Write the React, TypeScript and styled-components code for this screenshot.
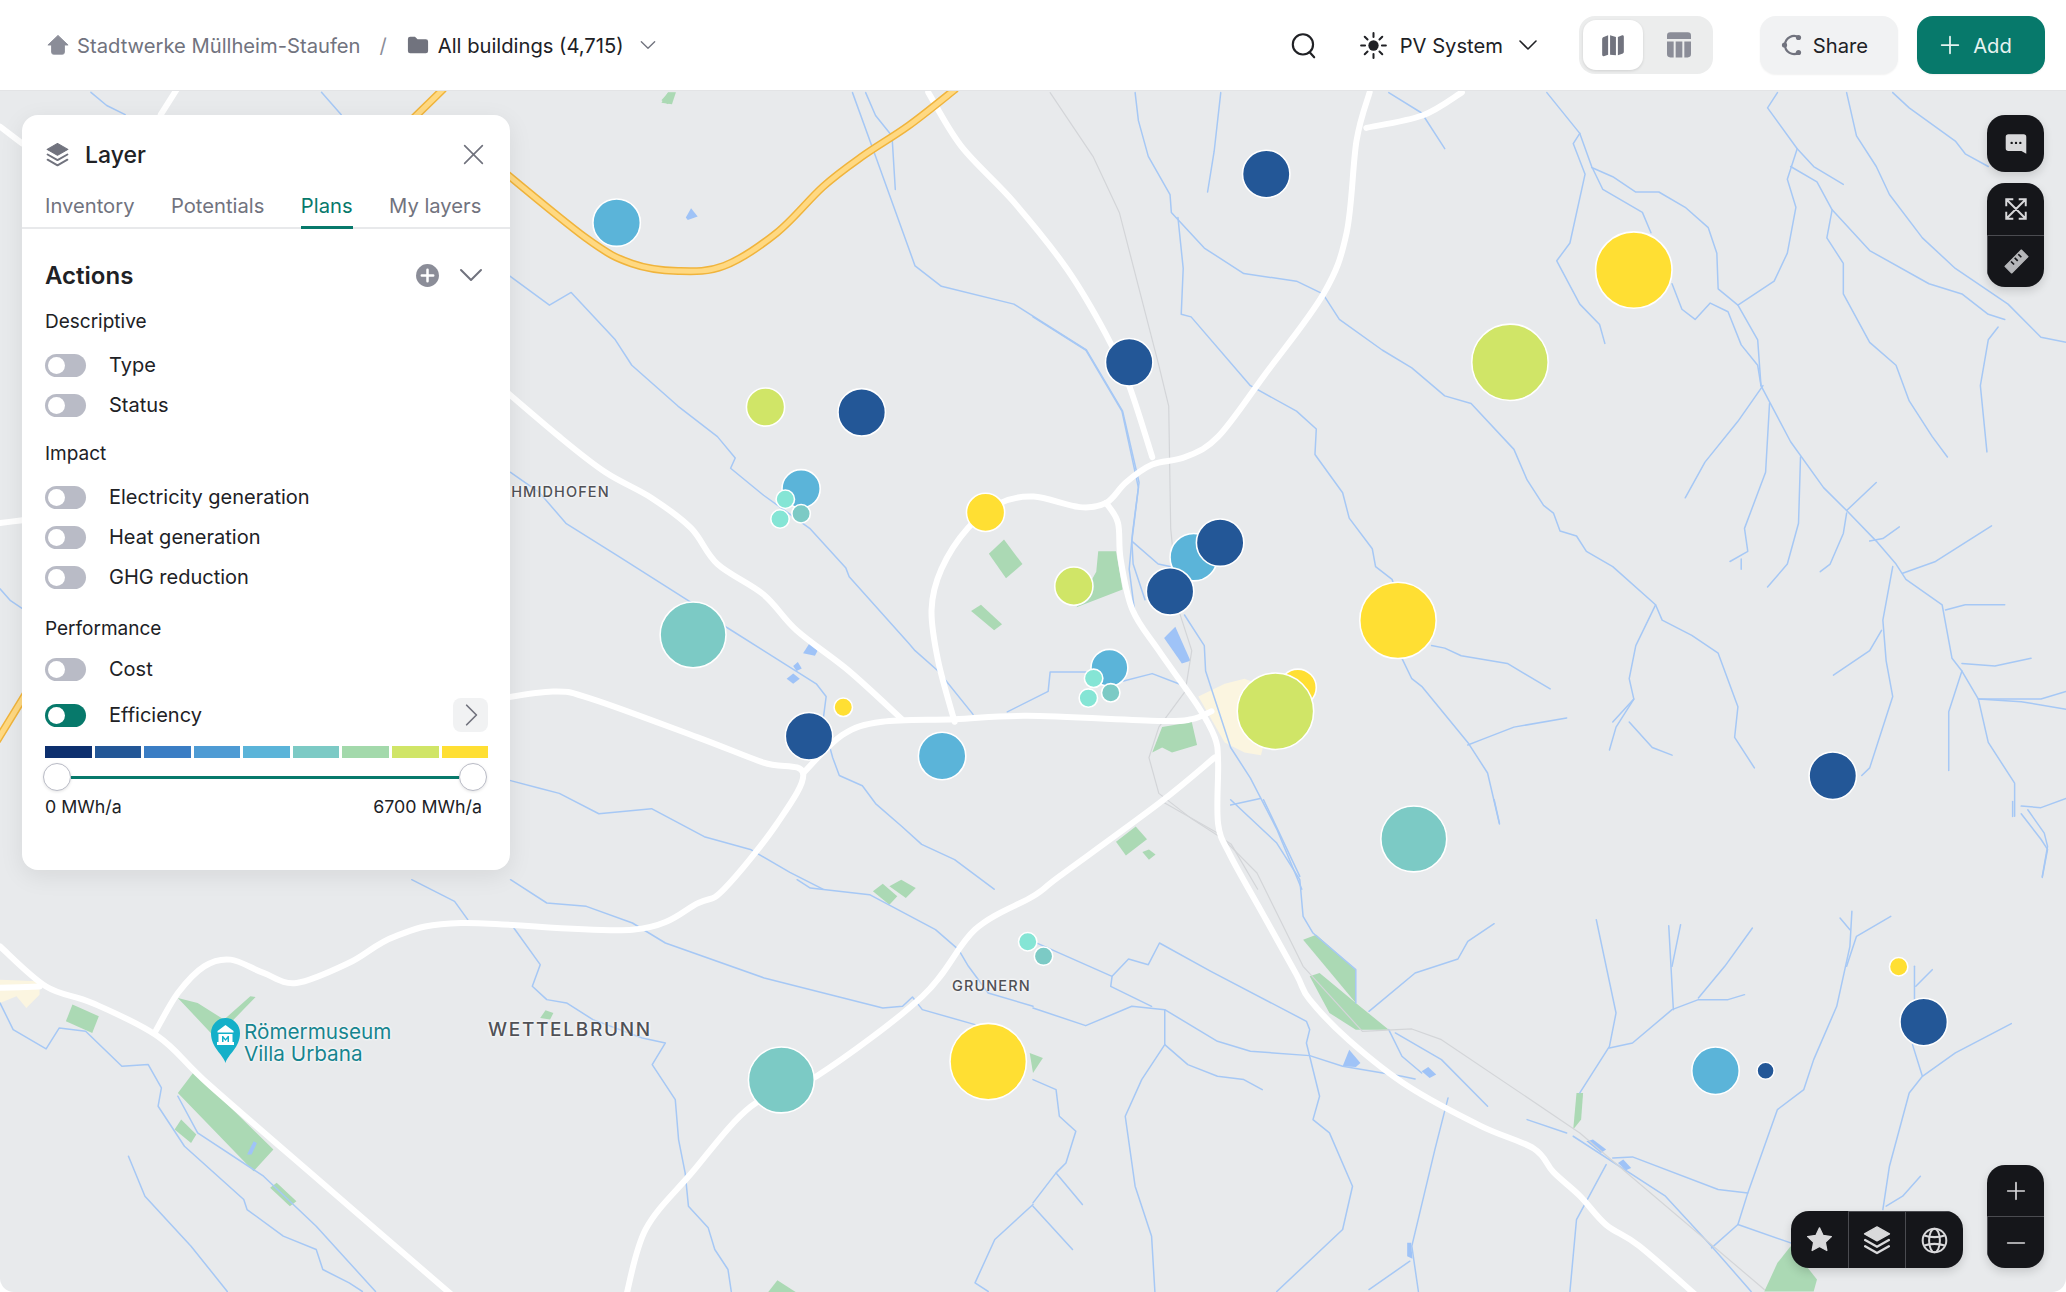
import React from 'react';
import { createGlobalStyle, styled } from 'styled-components';

const TEAL = '#07796b';
const GREY = '#71737e';
const INK = '#202125';

const GlobalStyle = createGlobalStyle`
  html, body { margin: 0; padding: 0; background: #fff; }
  body { font-family: Inter, "Noto Sans", sans-serif; color: ${INK}; }
  * { box-sizing: border-box; }
`;

const Page = styled.div`
  width: 2066px;
  height: 1292px;
  display: flex;
  flex-direction: column;
  overflow: hidden;
`;

const TopBar = styled.header`
  flex: none;
  height: 91px;
  display: flex;
  align-items: center;
  justify-content: space-between;
  padding: 0 21px 0 47px;
  border-bottom: 1px solid #e3e4e6;
  font-size: 20.2px;
`;

const Crumbs = styled.nav`
  display: flex;
  align-items: center;
`;

const CrumbRoot = styled.span`
  margin-left: 8px;
  color: ${GREY};
`;

const CrumbSep = styled.span`
  margin: 0 20px 0 19px;
  color: #8b8d98;
`;

const CrumbCurrent = styled.span`
  margin: 0 14px 0 9px;
  color: ${INK};
`;

const Actions = styled.div`
  display: flex;
  align-items: center;
`;

const SearchSlot = styled.div`
  display: flex;
  margin-right: 43px;
`;

const SystemPicker = styled.div`
  display: flex;
  align-items: center;
  gap: 13px;
  margin-right: 39px;
  white-space: nowrap;
`;

const ViewSwitch = styled.div`
  display: flex;
  width: 134px;
  height: 58px;
  padding: 4px;
  background: #eceded;
  border-radius: 16px;
  margin-right: 47px;
`;

const ViewButton = styled.div<{ $active?: boolean }>`
  flex: none;
  width: ${({ $active }) => ($active ? 60 : 72)}px;
  display: flex;
  align-items: center;
  justify-content: center;
  border-radius: 13px;
  background: ${({ $active }) => ($active ? '#fff' : 'transparent')};
  box-shadow: ${({ $active }) => ($active ? '0 1px 3px rgba(0,0,0,.12)' : 'none')};
`;

const BarButton = styled.button<{ $primary?: boolean }>`
  height: 58px;
  width: ${({ $primary }) => ($primary ? 128 : 138)}px;
  margin-left: ${({ $primary }) => ($primary ? 19 : 0)}px;
  padding: 0 10px 0 0;
  display: flex;
  align-items: center;
  justify-content: center;
  gap: ${({ $primary }) => ($primary ? 13 : 9)}px;
  border: 0;
  border-radius: 16px;
  font: inherit;
  color: ${({ $primary }) => ($primary ? '#e6f3f1' : INK)};
  background: ${({ $primary }) => ($primary ? TEAL : '#f1f2f3')};
  box-shadow: 0 1px 2px rgba(0, 0, 0, 0.06);
`;

const MapArea = styled.main`
  position: relative;
  flex: 1;
  background: #e8eaec;
  border-radius: 0 0 14px 14px;
  overflow: hidden;
`;

const MapDrawing = styled.svg`
  position: absolute;
  inset: 0;
  width: 100%;
  height: 100%;
`;

const Strokes = styled.g<{ $color: string; $width: number }>`
  polyline,
  path {
    fill: none;
    stroke: ${({ $color }) => $color};
    stroke-width: ${({ $width }) => $width}px;
    stroke-linejoin: round;
    stroke-linecap: round;
    vector-effect: non-scaling-stroke;
  }
`;

const Fills = styled.g<{ $color: string }>`
  polygon {
    fill: ${({ $color }) => $color};
  }
`;

const Dot = styled.circle`
  stroke: #fff;
  stroke-width: 1.2;
`;

const PlaceLabel = styled.span<{ $x: number; $y: number; $size: number; $spacing: number }>`
  position: absolute;
  left: ${({ $x }) => $x}px;
  top: ${({ $y }) => $y}px;
  transform: translateY(-50%);
  font-size: ${({ $size }) => $size}px;
  font-weight: 500;
  letter-spacing: ${({ $spacing }) => $spacing}px;
  color: #505156;
  white-space: nowrap;
  text-shadow: 0 0 3px #fff, 0 0 3px #fff;
`;

const Poi = styled.div`
  position: absolute;
  left: 211px;
  top: 927px;
  display: flex;
  align-items: flex-start;
  gap: 4px;
`;

const PoiName = styled.div`
  padding-top: 3px;
  font-size: 20.7px;
  line-height: 22px;
  color: #17858f;
  text-shadow: 0 0 3px #fff, 0 0 3px #fff;
`;

const Panel = styled.aside`
  position: absolute;
  left: 22px;
  top: 24px;
  width: 488px;
  height: 755px;
  background: #fff;
  border-radius: 16px;
  box-shadow: 0 6px 24px rgba(0, 0, 0, 0.08);
`;

const PanelHead = styled.div`
  height: 63px;
  padding: 16px 24px 0 23px;
  display: flex;
  align-items: center;
  justify-content: space-between;
`;

const PanelTitle = styled.div`
  display: flex;
  align-items: center;
  gap: 15px;
  font-size: 23px;
  font-weight: 500;
`;

const Tabs = styled.div`
  height: 51px;
  padding: 0 23px;
  display: flex;
  gap: 36.5px;
  border-bottom: 2px solid #e8e9eb;
`;

const Tab = styled.div<{ $active?: boolean }>`
  height: 51px;
  padding-top: 15px;
  font-size: 20.2px;
  color: ${({ $active }) => ($active ? TEAL : GREY)};
  border-bottom: 3px solid ${({ $active }) => ($active ? TEAL : 'transparent')};
`;

const PanelBody = styled.div`
  padding: 0 22px 0 23px;
`;

const SectionHead = styled.div`
  height: 79px;
  padding-top: 13px;
  display: flex;
  align-items: center;
  justify-content: space-between;
`;

const SectionName = styled.div`
  font-size: 24px;
  font-weight: 600;
`;

const SectionTools = styled.div`
  display: flex;
  align-items: center;
  gap: 16px;
  padding-right: 2px;
`;

const Group = styled.div<{ $after: number }>`
  margin-bottom: ${({ $after }) => $after}px;
`;

const GroupName = styled.div<{ $after: number }>`
  height: 28px;
  line-height: 28px;
  font-size: 19px;
  margin-bottom: ${({ $after }) => $after}px;
`;

const Row = styled.div<{ $tall?: boolean }>`
  height: ${({ $tall }) => ($tall ? 52 : 40)}px;
  display: flex;
  align-items: center;
  gap: 23px;
  font-size: 20px;
`;

const Switch = styled.span<{ $on?: boolean }>`
  flex: none;
  width: 41px;
  height: 23px;
  padding: 3px;
  border-radius: 12px;
  display: flex;
  background: ${({ $on }) => ($on ? TEAL : '#b9bbc6')};

  &::before {
    content: '';
    width: 17px;
    height: 17px;
    border-radius: 50%;
    background: #fff;
  }
`;

const Expand = styled.span`
  margin-left: auto;
  width: 35px;
  height: 34px;
  display: flex;
  align-items: center;
  justify-content: center;
  background: #f1f2f3;
  border-radius: 8px;
`;

const Scale = styled.div`
  display: flex;
  gap: 3px;
  margin-top: 5px;
`;

const ScaleStep = styled.span<{ $color: string }>`
  flex: 1;
  height: 12px;
  background: ${({ $color }) => $color};
`;

const Slider = styled.div`
  height: 38px;
  display: flex;
  align-items: center;
  margin: 0 1px 0 -2px;
`;

const SliderTrack = styled.div`
  flex: 1;
  height: 3px;
  background: ${TEAL};
`;

const SliderHandle = styled.span`
  width: 28px;
  height: 28px;
  flex: none;
  border-radius: 50%;
  background: #fff;
  border: 1.5px solid #b9bbc6;
  box-shadow: 0 1px 3px rgba(0, 0, 0, 0.1);
`;

const Range = styled.div`
  display: flex;
  justify-content: space-between;
  padding-right: 6px;
  font-size: 17.8px;
`;

const Controls = styled.div`
  position: absolute;
  top: 24px;
  right: 22px;
  bottom: 24px;
  display: flex;
  flex-direction: column;
  justify-content: space-between;
  align-items: flex-end;
`;

const ControlTop = styled.div`
  display: flex;
  flex-direction: column;
  gap: 11px;
`;

const ControlBottom = styled.div`
  display: flex;
  align-items: flex-end;
  gap: 24px;
`;

const Stack = styled.div<{ $row?: boolean }>`
  display: flex;
  flex-direction: ${({ $row }) => ($row ? 'row' : 'column')};
  width: ${({ $row }) => ($row ? 172 : 57)}px;
  background: #15161a;
  border-radius: 18px;
  box-shadow: 0 4px 10px rgba(0, 0, 0, 0.14);
  overflow: hidden;
`;

const StackCell = styled.div<{ $row?: boolean; $h?: number }>`
  flex: ${({ $row }) => ($row ? 1 : 'none')};
  height: ${({ $h }) => $h ?? 57}px;
  display: flex;
  align-items: center;
  justify-content: center;
  color: #d9d9db;

  & + & {
    ${({ $row }) => ($row ? 'border-left' : 'border-top')}: 1px solid #4a4b50;
  }
`;

const Icon = styled.svg<{ $size: number; $color?: string }>`
  flex: none;
  width: ${({ $size }) => $size}px;
  height: ${({ $size }) => $size}px;
  color: ${({ $color }) => $color ?? 'currentColor'};
`;

type IconProps = { size: number; color?: string; children: React.ReactNode };

const Ico = ({ size, color, children }: IconProps) => (
  <Icon $size={size} $color={color} viewBox="0 0 24 24" fill="none" stroke="none">
    {children}
  </Icon>
);

const Chevron = ({ size, color, dir = 'down' }: { size: number; color: string; dir?: 'down' | 'right' }) => (
  <Ico size={size} color={color}>
    <path
      d={dir === 'down' ? 'M4 8l8 8 8-8' : 'M8 3l9 9-9 9'}
      stroke="currentColor"
      strokeWidth="1.6"
      strokeLinecap="round"
      strokeLinejoin="round"
    />
  </Ico>
);

const LayersGlyph = ({ size, color }: { size: number; color?: string }) => (
  <Ico size={size} color={color}>
    <path d="M12 1.500l10 5.600-10 5.600L2 7.100z" fill="currentColor" stroke="currentColor" strokeLinejoin="round" />
    <path
      d="M2.500 12l9.500 5.400 9.500-5.400M2.500 17l9.500 5.400 9.500-5.400"
      stroke="currentColor"
      strokeWidth="1.9"
      strokeLinecap="round"
      strokeLinejoin="round"
    />
  </Ico>
);

const smooth = (pts: number[][]) => {
  let d = `M${pts[0][0]} ${pts[0][1]}`;
  for (let i = 0; i < pts.length - 1; i++) {
    const p0 = pts[i - 1] ?? pts[i];
    const p1 = pts[i];
    const p2 = pts[i + 1];
    const p3 = pts[i + 2] ?? p2;
    const c1 = [p1[0] + (p2[0] - p0[0]) / 6, p1[1] + (p2[1] - p0[1]) / 6];
    const c2 = [p2[0] - (p3[0] - p1[0]) / 6, p2[1] - (p3[1] - p1[1]) / 6];
    d += `C${c1[0].toFixed(1)} ${c1[1].toFixed(1)} ${c2[0].toFixed(1)} ${c2[1].toFixed(1)} ${p2[0]} ${p2[1]}`;
  }
  return d;
};

// crops of the map were traced at different scales, one transform per crop
const Z5 = 'translate(0 667.9) scale(.5 .253)';
const Z6 = 'translate(379.5 68.3) scale(.5 .387)';
const Z7 = 'translate(784 68.3) scale(.5 .387)';
const Z8 = 'translate(784 607.2) scale(.5 .253)';

const water: [string, string[]][] = [
  [
    Z5,
    [
      '625,0 690,65 710,120',
      '775,0 830,70 890,80 960,130 1010,190 1160,295 1340,385 1370,380 1385,352 1400,390 1480,435',
      '1210,0 1230,25 1320,45 1420,150 1455,210 1470,260 1500,340 1568,380',
      '780,145 820,255 808,320 830,360 860,370 900,420 975,475 1010,490 990,555 1025,660 1030,780 1040,880 1045,980 1075,1045 1085,1110 1105,1170 1110,1236',
      '0,370 20,450 70,508 90,445 130,455 185,560 225,555 245,625 240,680 280,800 370,960 375,990 430,1070 480,1110 490,1170 530,1210 550,1236',
      '195,830 220,950 290,1100 345,1236',
      '270,650 300,760 400,890 480,1040 570,1236',
      '1568,975 1510,1080 1480,1210 1500,1236',
    ],
  ],
  [
    Z6,
    [
      '15,365 75,422 108,397 175,490 200,540 270,620 330,680 357,722 350,742 400,795 470,860 525,938 530,955 620,1085 630,1100 665,1140 718,1225',
      '16,750 60,790 100,850 180,915 290,1005 345,1055 480,1165 495,1190 490,1240 505,1310 515,1345 550,1365 570,1400 610,1445 640,1480 690,1510 750,1568',
      '16,1355 60,1370 90,1380 150,1420 230,1410 310,1465 380,1490 440,1535 490,1568',
      '535,5 570,130 630,345 670,385 780,420 890,510 945,630 970,770 960,870 955,940 965,1040',
      '555,5 570,50 595,90 600,195',
      '770,1220 832,1180 835,1142 890,1142',
      '945,1160 990,1145 1030,1165',
    ],
  ],
  [
    Z7,
    [
      '155,5 160,60 175,130 208,205 210,240 260,310 320,360 400,375 440,400 465,450 530,510 575,545 625,600 665,615 730,705 750,765 775,815 790,830 800,865 825,875 840,905 880,935 945,1010 955,1040 1000,1070 1040,1105 1070,1210 1065,1270 1095,1330',
      '220,250 228,350 225,440 240,445 330,580 400,630 430,665 428,715 470,790 480,840 515,900 520,935 545,960 555,1000',
      '560,1115 575,1155 590,1170 660,1280 690,1340 708,1440',
      '285,5 275,120 265,200',
      '540,5 590,45 625,115',
      '780,5 830,85 820,105 838,165 815,300 795,335 830,420 860,460 868,497',
      '830,85 848,150 865,195 925,240 938,280',
      '970,380 985,430 1005,450 1028,418 1055,435 1075,500 1100,540 1105,580',
      '848,152 880,170 915,200 950,200 990,230 1025,270 1038,320 1040,390 1070,422 1125,375 1145,320 1158,230 1145,175 1160,115 1115,35 1130,5',
      '1070,422 1100,490 1105,580 1150,690 1200,780 1235,825 1280,885 1310,930 1325,960 1380,1010 1395,1115 1410,1140 1435,1195 1530,1195 1568,1180',
      '1160,115 1185,150 1230,185',
      '1150,150 1190,180 1213,235 1270,315 1360,380 1410,400 1450,440 1475,450',
      '1235,5 1250,90 1280,150 1300,205 1350,290 1400,350 1480,420 1530,485 1568,495',
      '1305,5 1330,35 1400,100 1415,125 1450,150',
      '1213,235 1205,290 1230,340 1230,400 1270,495 1310,540 1330,610 1365,680 1388,720',
      '1465,465 1450,490 1438,580 1448,710',
      '1108,580 1070,650 1020,730 990,800',
      '1118,615 1112,750 1080,860 1085,905 1058,925',
      '1075,920 1075,940',
      '1165,720 1162,850 1145,930 1115,975',
      '1235,825 1280,770',
      '1235,830 1230,870 1210,930 1195,945',
      '1270,885 1290,880 1315,857',
      '1320,948 1370,925 1455,855',
      '1305,935 1290,1040 1295,1120 1305,1190 1270,1330 1258,1345',
      '1288,1060 1270,1100 1215,1148',
      '1385,1020 1415,1010 1475,1010',
      '1410,1125 1460,1130 1515,1115',
      '1410,1140 1390,1220 1390,1335',
      '1435,1195 1450,1280 1490,1360 1490,1425',
      '1500,1405 1530,1408 1568,1390',
      '1500,1420 1530,1470 1540,1490 1532,1545',
      '1435,1195 1500,1200 1568,1215',
      '945,1010 915,1090 905,1155 912,1195 880,1240',
      '912,1195 885,1250 875,1295',
      '905,1240 940,1290 970,1305',
      '605,1090 625,1095 650,1110 720,1125 785,1175',
      '660,1285 680,1275 730,1250 810,1232',
      '150,885 190,930 208,935',
      '230,1030 260,1090 262,1140 300,1290 330,1350 370,1450 408,1568',
      '300,1403 345,1390',
      '0,445 80,510 135,630 160,780 150,885 152,930 170,1000',
    ],
  ],
  [
    Z8,
    [
      '300,0 370,130 405,240 410,350 425,400 490,510 490,610',
      '350,0 405,230',
      '0,425 120,530 118,560 180,620',
      '120,530 145,478 175,495 192,430 270,515 415,665 420,690 415,730 435,890 425,960 450,1000 485,1160 470,1290 370,1476',
      '0,625 80,678 150,620 200,630 280,725 330,755 420,768 470,800 560,830 580,838',
      '200,630 200,735 165,840 140,950 155,1160 180,1310 185,1476',
      '200,735 235,795 280,830 320,840 348,870',
      '510,635 580,520 645,478 660,425 700,372',
      '540,690 560,770 590,820',
      '550,700 620,780 690,920',
      '855,360 885,640 875,740 830,880',
      '875,745 910,730 970,630 1010,600 1055,600 1080,585',
      '965,378 972,630',
      '983,375 970,500',
      '1092,385 1050,500 1010,595',
      '1225,355 1240,390',
      '1243,335 1240,440 1220,620 1185,780 1170,870 1130,930 1085,1180 1070,1275 1030,1345',
      '1302,350 1250,410 1235,500',
      '1338,500 1338,600',
      '1365,510 1340,560',
      '1335,735 1350,830 1330,880 1300,1100 1290,1230',
      '1485,672 1400,760 1350,830',
      '1347,1130 1320,1190 1295,1220',
      '880,1075 910,1072 1040,1170 1085,1180',
      '630,895 610,1050 575,1340 585,1476',
      '870,1095 825,1260 815,1476',
      '820,1010 960,1190 1030,1340 1090,1476',
      '750,960 810,1000',
      '0,1220 60,1350',
      '0,1210 35,1120 75,1215',
      '0,840 35,870 40,950 65,995 50,1090 35,1120',
      '572,1385 510,1470',
      '1070,1275 1150,1330',
      '1487,5 1487,50',
      '1510,30 1535,100 1540,140 1532,230',
      '700,0 708,70',
    ],
  ],
  ['', ['69,70 81,80 95,87', '244,70 259,87', '0,447 8,456 17,462']],
];

const greens: [string, string[]][] = [
  [
    Z5,
    [
      '110,375 150,410 140,460 100,425',
      '270,355 300,370 340,420 380,350 388,352 340,450 320,460',
      '295,575 320,625 415,810 385,875 270,640',
      '265,750 275,720 298,765 290,790',
      '410,925 420,910 450,965 440,980',
      '820,415 828,392 840,400 835,420',
      '1325,35 1340,12 1362,50 1350,75',
      '1350,20 1368,0 1390,25 1375,55',
    ],
  ],
  [
    Z6,
    [
      '742,910 765,882 793,930 768,958',
      '715,1022 730,1010 762,1048 750,1060',
      '875,1015 905,945 908,905 935,905 945,980',
      '990,1300 1005,1250 1050,1240 1058,1285 1020,1300 1005,1290',
      '935,1475 965,1445 982,1470 950,1502',
      '975,1495 985,1490 995,1500 985,1510',
      '245,20 255,5 265,5 255,28',
    ],
  ],
  [
    Z8,
    [
      '410,420 430,405 490,510 490,610',
      '420,530 435,520 490,610 540,690 490,690 450,640',
      '825,880 835,880 832,960 820,990',
      '-5,760 15,775 0,820',
      '1130,1390 1150,1340 1190,1440 1185,1476 1110,1476',
    ],
  ],
  ['', ['502,78 507,70 513,70 510,79', '580,985 590,972 610,985 605,992']],
];

const ponds: [string, string[]][] = [
  [
    Z6,
    [
      '1008,1075 1025,1053 1048,1120 1035,1125',
      '282,250 290,232 300,248 285,255',
      '435,1155 445,1145 455,1155 445,1165',
      '460,1105 470,1085 482,1100 478,1110',
      '445,1130 452,1122 458,1135 450,1140',
    ],
  ],
  [
    Z8,
    [
      '470,800 480,750 497,790 490,802',
      '840,1025 850,1020 870,1050 862,1060',
      '888,1090 896,1080 908,1105 900,1112',
      '590,815 600,802 612,825 602,835',
      '568,1330 574,1330 576,1378 568,1370',
    ],
  ],
  [Z5, ['375,825 385,785 390,790 382,825']],
];

const urban: [string, string[]][] = [
  [Z6, ['1060,1190 1100,1165 1130,1155 1180,1180 1155,1305 1130,1300 1100,1280']],
  [Z5, ['0,300 60,305 60,345 40,385 25,350 0,370']],
];

const roads: number[][][] = [
  [[704.5, 70], [729.5, 110.9], [769.5, 153.4], [809.5, 203.8], [839.5, 254], [857, 292.8], [874.5, 347]],
  [[1039.5, 70], [1029.5, 107], [1022, 176.7], [1004.5, 223], [959.5, 285], [924.5, 331.5], [899.5, 347], [874.5, 352.7], [854.5, 366.3], [839.5, 381.8], [819.5, 385], [784.5, 377], [759.5, 381.8], [734.5, 401], [714.5, 432], [707, 463], [712, 501.8], [724.5, 548]],
  [[1037, 97], [1079.5, 87.6], [1109.5, 70]],
  [[839.5, 381.8], [848.5, 397], [850.5, 424.3], [859.5, 463], [879.5, 494], [909.5, 536.6], [922, 560], [924.5, 579], [924.5, 625.6], [934, 650], [959, 695], [984, 740], [994, 759], [1024, 790], [1069, 825], [1124, 855], [1164, 872], [1179, 890], [1199, 908], [1219, 930], [1244, 946], [1289, 985]],
  [[370, 532], [419.5, 525], [449.5, 530.8], [529.5, 559.8], [579.5, 579], [609.5, 587], [589.5, 625.6], [549.5, 675], [530, 685.6], [480, 705.9], [350, 700.8], [300, 710.9], [265, 731], [225, 746.3], [200, 738.7], [175, 728.6], [155, 733.7], [135, 754], [117.5, 784]],
  [[609.5, 587], [639.5, 557.9], [669.5, 548], [724.5, 546], [779.5, 543.5], [879.5, 547.4], [904.5, 546], [919.5, 540]],
  [[370, 285], [424.5, 331.5], [459.5, 358.5], [494.5, 378], [524.5, 401], [544.5, 428.2], [579.5, 451.4], [604.5, 478.5], [644.5, 509.5], [684.5, 546]],
  [[922, 575], [879.5, 610], [804.5, 665], [784, 680.5], [740, 705.8], [700, 756.5], [620, 817], [570, 840], [525, 890.5], [490, 933.5], [475, 985]],
  [[0, 718.5], [35, 749], [70, 761.5], [120, 787], [160, 824.8], [250, 903], [345, 985]],
  [[0, 750], [30, 749]],
  [[0, 96], [17, 109]],
  [[134, 68], [122, 87]],
  [[0, 397], [17, 395]],
];

const rail =
  '835,5 900,130 940,240 1000,540 1015,620 1018,860 1030,1020 1050,1100 1040,1180 1000,1250 985,1310 1000,1380 1050,1430 1110,1480 1150,1568';

const LIGHT = '#5bb4d9';
const DARK = '#235797';
const YELLOW = '#ffdf33';
const LIME = '#d0e567';
const AQUA = '#7ccac5';
const MINT = '#85e5d5';

const dots: [number, number, number, string][] = [
  [468, 169, 18, LIGHT],
  [961, 132, 18, DARK],
  [1240, 205, 29, YELLOW],
  [1146, 275, 29, LIME],
  [857, 275, 18, DARK],
  [654, 313, 18, DARK],
  [581, 309, 14.5, LIME],
  [608, 371, 14.5, LIGHT],
  [608, 390, 7, AQUA],
  [596, 379, 7, MINT],
  [592, 394, 7, MINT],
  [748, 389, 14.5, YELLOW],
  [815, 445, 14.5, LIME],
  [906, 423, 18, LIGHT],
  [926, 412, 18, DARK],
  [888, 449, 18, DARK],
  [1061, 471, 29, YELLOW],
  [526, 482, 25, AQUA],
  [842, 507, 14, LIGHT],
  [830, 515, 7, MINT],
  [826, 530, 7, MINT],
  [843, 526, 7, AQUA],
  [640, 537, 7, YELLOW],
  [985, 522, 14, YELLOW],
  [968, 540, 29, LIME],
  [614, 559, 18, DARK],
  [715, 574, 18, LIGHT],
  [1391, 589, 18, DARK],
  [1073, 637, 25, AQUA],
  [780, 715, 7, MINT],
  [792, 726, 7, AQUA],
  [750, 806, 29, YELLOW],
  [593, 820, 25, AQUA],
  [1441, 734, 7, YELLOW],
  [1460, 776, 18, DARK],
  [1302, 813, 18, LIGHT],
  [1340, 813, 6.5, DARK],
];

const scale = ['#0d2f6e', '#235797', '#3a7dc4', '#4e9bd4', '#5bb4d9', '#7ccac5', '#a3d9ab', '#d0e567', '#ffdf33'];

const Shapes = ({ sets }: { sets: [string, string[]][] }) => (
  <>
    {sets.map(([t, list], i) => (
      <g key={i} transform={t}>
        {list.map((p) => (
          <polygon key={p} points={p} />
        ))}
      </g>
    ))}
  </>
);

const MapBase = () => (
  <MapDrawing viewBox="0 69 1568 912" preserveAspectRatio="none">
    <Fills $color="#fbf5e0">
      <Shapes sets={urban} />
    </Fills>
    <Fills $color="#abd9b4">
      <Shapes sets={greens} />
    </Fills>
    <Fills $color="#9fc3f7">
      <Shapes sets={ponds} />
    </Fills>
    <Strokes $color="#a6c8f5" $width={1.5}>
      {water.map(([t, list], i) => (
        <g key={i} transform={t}>
          {list.map((p) => (
            <polyline key={p} points={p} />
          ))}
        </g>
      ))}
    </Strokes>
    <Strokes $color="#d3d5d8" $width={1.2}>
      <g transform={Z6}>
        <polyline points={rail} />
      </g>
      <g transform={Z8}>
        <polyline points="200,10 280,100 340,220 410,500 500,695 575,688 620,720 830,1000 1110,1470" />
      </g>
    </Strokes>
    <Strokes $color="#fff" $width={6}>
      {roads.map((r, i) => (
        <path key={i} d={smooth(r)} />
      ))}
    </Strokes>
    {[
      ['#f0b43c', 8],
      ['#ffd982', 5],
    ].map(([color, width]) => (
      <Strokes key={String(color)} $color={String(color)} $width={Number(width)}>
        <path
          d={smooth([
            [370, 120],
            [444.5, 180.5],
            [479.5, 200],
            [514.5, 205.7],
            [549.5, 201.8],
            [589.5, 176.7],
            [624.5, 141.8],
            [654.5, 118.6],
            [689.5, 95.4],
            [724.5, 68],
          ])}
        />
        <path d="M336 68L313.500 90" />
        <path d="M-2 562L20 526" />
      </Strokes>
    ))}
    {dots.map(([x, y, r, c], i) => (
      <Dot key={i} cx={x} cy={y} r={r} fill={c} />
    ))}
  </MapDrawing>
);

const Toggle = ({ label, on, extra, tall }: { label: string; on?: boolean; extra?: React.ReactNode; tall?: boolean }) => (
  <Row $tall={tall}>
    <Switch $on={on} />
    {label}
    {extra}
  </Row>
);

export default function App() {
  return (
    <Page>
      <GlobalStyle />
      <TopBar>
        <Crumbs>
          <Ico size={22} color="#8b8d98">
            <path
              d="M12 1.500L23 12h-4v8a2 2 0 0 1-2 2H7a2 2 0 0 1-2-2v-8H1z"
              fill="currentColor"
              stroke="currentColor"
              strokeLinejoin="round"
            />
          </Ico>
          <CrumbRoot>Stadtwerke Müllheim-Staufen</CrumbRoot>
          <CrumbSep>/</CrumbSep>
          <Ico size={22} color={GREY}>
            <path
              d="M1 5.500A2.500 2.500 0 0 1 3.500 3h5.200l2.800 2.800h9A2.500 2.500 0 0 1 23 8.300v10.200a2.500 2.500 0 0 1-2.500 2.500h-17A2.500 2.500 0 0 1 1 18.500z"
              fill="currentColor"
            />
          </Ico>
          <CrumbCurrent>All buildings (4,715)</CrumbCurrent>
          <Chevron size={20} color={GREY} />
        </Crumbs>
        <Actions>
          <SearchSlot>
            <Ico size={27} color={INK}>
              <circle cx="11.500" cy="11" r="9" stroke="currentColor" strokeWidth="1.900" />
              <path d="M17.500 18l4 4.500" stroke="currentColor" strokeWidth="1.900" strokeLinecap="round" />
            </Ico>
          </SearchSlot>
          <SystemPicker>
            <Ico size={27} color={INK}>
              <circle cx="12" cy="12" r="4.600" fill="currentColor" />
              <path
                d="M12 1v3.500M12 19.500V23M1 12h3.500M19.500 12H23M4.200 4.200l2.500 2.500M17.300 17.300l2.500 2.500M19.800 4.200l-2.500 2.500M6.700 17.300l-2.500 2.500"
                stroke="currentColor"
                strokeWidth="1.800"
                strokeLinecap="round"
              />
            </Ico>
            PV System
            <Chevron size={24} color={INK} />
          </SystemPicker>
          <ViewSwitch>
            <ViewButton $active>
              <Ico size={26} color={GREY}>
                <path
                  d="M2 6.500c0-1 .6-1.700 1.500-2L7.500 3v18l-4 1.300c-.8.200-1.500-.400-1.500-1.300zM9.300 3l5.400 1.500v17L9.300 21zM16.500 4.500l4-1.400c.8-.300 1.500.300 1.500 1.200v13.900c0 1-.6 1.600-1.500 1.900l-4 1.400z"
                  fill="currentColor"
                />
              </Ico>
            </ViewButton>
            <ViewButton>
              <Ico size={32} color="#8b8d98">
                <path
                  d="M3 5a2.500 2.500 0 0 1 2.500-2.500h13A2.500 2.500 0 0 1 21 5v2.500H3zM3 9.300h5v12H5.500A2.500 2.500 0 0 1 3 18.800zM9.500 9.300h5v12h-5zM16 9.300h5v9.500a2.500 2.500 0 0 1-2.500 2.500H16z"
                  fill="currentColor"
                />
              </Ico>
            </ViewButton>
          </ViewSwitch>
          <BarButton>
            <Ico size={24} color={GREY}>
              <path d="M19 4.500A9 9 0 0 0 5 11.500a9 9 0 0 0 14 8" stroke="currentColor" strokeWidth="2.200" />
              <circle cx="18.500" cy="4.500" r="2.600" fill="currentColor" />
              <circle cx="18.500" cy="19.500" r="2.600" fill="currentColor" />
              <circle cx="4.500" cy="12" r="2.600" fill="currentColor" />
            </Ico>
            Share
          </BarButton>
          <BarButton $primary>
            <Ico size={20} color="#e6f3f1">
              <path d="M12 2v20M2 12h20" stroke="currentColor" strokeWidth="2.100" strokeLinecap="round" />
            </Ico>
            Add
          </BarButton>
        </Actions>
      </TopBar>
      <MapArea>
        <MapBase />
        <PlaceLabel $x={489} $y={400} $size={14.5} $spacing={1.1}>
          SCHMIDHOFEN
        </PlaceLabel>
        <PlaceLabel $x={488} $y={938} $size={19} $spacing={1.7}>
          WETTELBRUNN
        </PlaceLabel>
        <PlaceLabel $x={952} $y={894} $size={14.5} $spacing={1.1}>
          GRUNERN
        </PlaceLabel>
        <Poi>
          <svg width="29" height="45" viewBox="0 0 29 45">
            <path d="M14.500 45C12 36 0 30 0 15a14.500 15 0 0 1 29 0C29 30 17 36 14.500 45z" fill="#14b0c9" />
            <path d="M14.500 7l8 6v1.500h-16V13zM7.500 16h14v8h1.500v3H6v-3h1.500z" fill="#fff" />
            <path d="M11 18h1.200l2.300 3 2.300-3H18v6h-1.500v-3.500l-2 2.500-2-2.500V24H11z" fill="#14b0c9" />
          </svg>
          <PoiName>
            Römermuseum
            <br />
            Villa Urbana
          </PoiName>
        </Poi>
        <Panel>
          <PanelHead>
            <PanelTitle>
              <LayersGlyph size={25} color={GREY} />
              Layer
            </PanelTitle>
            <Ico size={25} color={GREY}>
              <path d="M3.500 3.500l17 17M20.500 3.500l-17 17" stroke="currentColor" strokeWidth="1.600" strokeLinecap="round" />
            </Ico>
          </PanelHead>
          <Tabs>
            <Tab>Inventory</Tab>
            <Tab>Potentials</Tab>
            <Tab $active>Plans</Tab>
            <Tab>My layers</Tab>
          </Tabs>
          <PanelBody>
            <SectionHead>
              <SectionName>Actions</SectionName>
              <SectionTools>
                <Ico size={25} color="#8b8d98">
                  <circle cx="12" cy="12" r="11" fill="currentColor" />
                  <path d="M12 6.500v11M6.500 12h11" stroke="#fff" strokeWidth="2.400" strokeLinecap="round" />
                </Ico>
                <Chevron size={30} color={GREY} />
              </SectionTools>
            </SectionHead>
            <Group $after={15}>
              <GroupName $after={9}>Descriptive</GroupName>
              <Toggle label="Type" />
              <Toggle label="Status" />
            </Group>
            <Group $after={18}>
              <GroupName $after={9}>Impact</GroupName>
              <Toggle label="Electricity generation" />
              <Toggle label="Heat generation" />
              <Toggle label="GHG reduction" />
            </Group>
            <GroupName $after={6}>Performance</GroupName>
            <Toggle label="Cost" />
            <Toggle
              label="Efficiency"
              on
              tall
              extra={
                <Expand>
                  <Chevron size={26} color={GREY} dir="right" />
                </Expand>
              }
            />
            <Scale>
              {scale.map((c) => (
                <ScaleStep key={c} $color={c} />
              ))}
            </Scale>
            <Slider>
              <SliderHandle />
              <SliderTrack />
              <SliderHandle />
            </Slider>
            <Range>
              <span>0 MWh/a</span>
              <span>6700 MWh/a</span>
            </Range>
          </PanelBody>
        </Panel>
        <Controls>
          <ControlTop>
            <Stack>
              <StackCell>
                <Ico size={26}>
                  <path
                    d="M5 3h14a2.500 2.500 0 0 1 2.500 2.500V21l-4.500-2.500H5A2.500 2.500 0 0 1 2.500 16V5.500A2.500 2.500 0 0 1 5 3z"
                    fill="currentColor"
                  />
                  <circle cx="8" cy="11" r="1.100" fill="#15161a" />
                  <circle cx="12" cy="11" r="1.100" fill="#15161a" />
                  <circle cx="16" cy="11" r="1.100" fill="#15161a" />
                </Ico>
              </StackCell>
            </Stack>
            <Stack>
              <StackCell $h={52}>
                <Ico size={26}>
                  <path
                    d="M3 3l18 18M21 3L3 21M3 9.500V3h6.500M14.500 3H21v6.500M21 14.500V21h-6.500M9.500 21H3v-6.500"
                    stroke="currentColor"
                    strokeWidth="1.800"
                  />
                </Ico>
              </StackCell>
              <StackCell $h={52}>
                <Ico size={29} color="#b5b6b9">
                  <path d="M16 2.500l5.500 5.500L8 21.500 2.500 16z" fill="currentColor" stroke="currentColor" strokeLinejoin="round" />
                  <path d="M7.500 12l2.500 2.500M10.500 9l2.500 2.500M13.500 6l2.500 2.500" stroke="#15161a" strokeWidth="1.400" />
                </Ico>
              </StackCell>
            </Stack>
          </ControlTop>
          <ControlBottom>
            <Stack $row>
              <StackCell $row>
                <Ico size={31}>
                  <path
                    d="M12 3l2.800 5.900 6.400.8-4.700 4.400 1.200 6.400L12 17.400l-5.700 3.100 1.200-6.400-4.700-4.400 6.400-.8z"
                    fill="currentColor"
                    stroke="currentColor"
                    strokeLinejoin="round"
                  />
                </Ico>
              </StackCell>
              <StackCell $row>
                <LayersGlyph size={30} />
              </StackCell>
              <StackCell $row>
                <Ico size={27}>
                  <circle cx="12" cy="12" r="10.500" stroke="currentColor" strokeWidth="1.800" />
                  <ellipse cx="12" cy="12" rx="4.800" ry="10.500" stroke="currentColor" strokeWidth="1.800" />
                  <path d="M3 7.500c5 2 13 2 18 0M3 16.500c5-2 13-2 18 0" stroke="currentColor" strokeWidth="1.800" />
                </Ico>
              </StackCell>
            </Stack>
            <Stack>
              <StackCell $h={51}>
                <Ico size={20}>
                  <path d="M12 2v20M2 12h20" stroke="currentColor" strokeWidth="2" strokeLinecap="round" />
                </Ico>
              </StackCell>
              <StackCell $h={52}>
                <Ico size={20}>
                  <path d="M2 12h20" stroke="currentColor" strokeWidth="2" strokeLinecap="round" />
                </Ico>
              </StackCell>
            </Stack>
          </ControlBottom>
        </Controls>
      </MapArea>
    </Page>
  );
}
